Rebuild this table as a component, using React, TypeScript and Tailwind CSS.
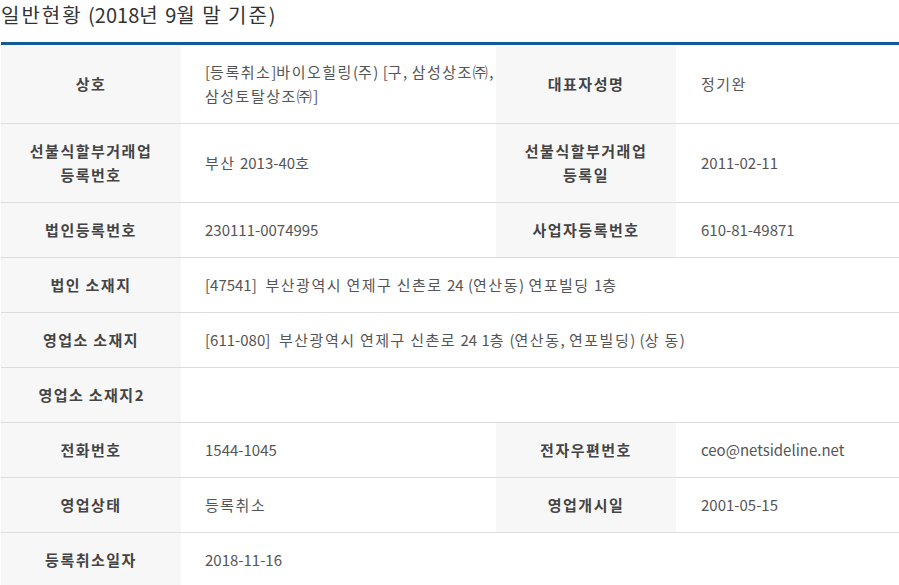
import React from "react";

const font = { fontFamily: '"Noto Sans CJK KR", "Noto Sans", sans-serif' };

// Widen Hangul runs slightly to match the reference's wider Korean glyphs
function K({ t }: { t: string }) {
  const parts = t.split(/([\uAC00-\uD7A3\u3200-\u32FF]+)/);
  return (
    <>
      {parts.map((p, i) =>
        /[\uAC00-\uD7A3\u3200-\u32FF]/.test(p) ? (
          <span key={i} className="tracking-[0.1em]">
            {p}
          </span>
        ) : (
          <React.Fragment key={i}>{p}</React.Fragment>
        )
      )}
    </>
  );
}

type Cell = { label: React.ReactNode; value?: React.ReactNode };
type Row = { h: string; cells: Cell[] };

const rows: Row[] = [
  {
    h: "h-[79px]",
    cells: [
      {
        label: <K t="상호" />,
        value: (
          <>
            <K t="[등록취소]바이오힐링(주) [구, 삼성상조㈜," />
            <br />
            <K t="삼성토탈상조㈜]" />
          </>
        ),
      },
      { label: <K t="대표자성명" />, value: <K t="정기완" /> },
    ],
  },
  {
    h: "h-[79px]",
    cells: [
      {
        label: (
          <>
            <K t="선불식할부거래업" />
            <br />
            <K t="등록번호" />
          </>
        ),
        value: <K t="부산 2013-40호" />,
      },
      {
        label: (
          <>
            <K t="선불식할부거래업" />
            <br />
            <K t="등록일" />
          </>
        ),
        value: "2011-02-11",
      },
    ],
  },
  {
    h: "h-[55px]",
    cells: [
      { label: <K t="법인등록번호" />, value: "230111-0074995" },
      { label: <K t="사업자등록번호" />, value: "610-81-49871" },
    ],
  },
  {
    h: "h-[55px]",
    cells: [
      {
        label: <K t="법인 소재지" />,
        value: (
          <>
            [47541]&nbsp;&nbsp;
            <K t="부산광역시 연제구 신촌로 24 (연산동) 연포빌딩 1층" />
          </>
        ),
      },
    ],
  },
  {
    h: "h-[55px]",
    cells: [
      {
        label: <K t="영업소 소재지" />,
        value: (
          <>
            [611-080]&nbsp;&nbsp;
            <K t="부산광역시 연제구 신촌로 24 1층 (연산동, 연포빌딩) (상 동)" />
          </>
        ),
      },
    ],
  },
  { h: "h-[55px]", cells: [{ label: <K t="영업소 소재지2" />, value: "" }] },
  {
    h: "h-[55px]",
    cells: [
      { label: <K t="전화번호" />, value: "1544-1045" },
      { label: <K t="전자우편번호" />, value: "ceo@netsideline.net" },
    ],
  },
  {
    h: "h-[55px]",
    cells: [
      { label: <K t="영업상태" />, value: <K t="등록취소" /> },
      { label: <K t="영업개시일" />, value: "2001-05-15" },
    ],
  },
  { h: "h-[55px]", cells: [{ label: <K t="등록취소일자" />, value: "2018-11-16" }] },
];

const labelCls =
  "w-[180px] shrink-0 bg-[#f7f7f7] flex items-center justify-center text-center text-[15px] leading-[24px] font-bold text-[#444]";

export default function App() {
  return (
    <div className="w-[899px] h-[585px] overflow-hidden bg-white [word-spacing:1px]" style={font}>
      <div className="h-[42px] pl-[1px] text-[20px] leading-[30px] text-[#333]">
        <K t="일반현황 (2018년 9월 말 기준)" />
      </div>
      <div className="ml-[1px] border-t-[3px] border-[#145a96]">
        {rows.map((r, i) => (
          <div key={i} className={`flex border-b border-[#dddddd] ${r.h}`}>
            {r.cells.length === 2 ? (
              <>
                <div className={labelCls}>
                  <div>{r.cells[0].label}</div>
                </div>
                <div className="w-[315px] shrink-0 flex items-center pl-[24px] text-[15px] leading-[24px] text-[#555]">
                  <div>{r.cells[0].value}</div>
                </div>
                <div className={labelCls}>
                  <div>{r.cells[1].label}</div>
                </div>
                <div className="flex-1 flex items-center pl-[25px] text-[15px] leading-[24px] text-[#555]">
                  <div>{r.cells[1].value}</div>
                </div>
              </>
            ) : (
              <>
                <div className={labelCls}>
                  <div>{r.cells[0].label}</div>
                </div>
                <div className="flex-1 flex items-center pl-[24px] text-[15px] leading-[24px] text-[#555]">
                  <div>{r.cells[0].value}</div>
                </div>
              </>
            )}
          </div>
        ))}
      </div>
    </div>
  );
}
